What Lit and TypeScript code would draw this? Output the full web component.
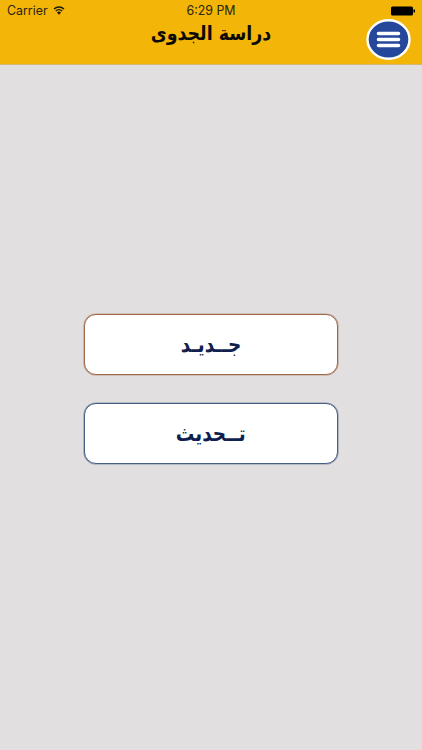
import { LitElement, html, css } from "lit";
import { customElement } from "lit/decorators.js";

@customElement("app-root")
export class AppRoot extends LitElement {
  static styles = css`
    :host { display: block; width: 422px; height: 750px; overflow: hidden; font-family: "Liberation Sans", Arial, sans-serif; }
    .page { height: 750px; display: flex; flex-direction: column; background: #e1dfe0; }
    .header { height: 65px; box-sizing: border-box; background: #f3b508; border-bottom: 1px solid #d2b874; position: relative; }
    .status { height: 20px; display: grid; grid-template-columns: 1fr auto 1fr; align-items: center; padding: 1px 7px 0; box-sizing: border-box; font-family: Inter, "Liberation Sans", sans-serif; font-size: 12.4px; color: #2a2410; }
    .left { display: flex; align-items: center; gap: 5px; }
    .right { justify-self: end; display: flex; }
    .title { direction: rtl; text-align: center; font-family: "DejaVu Sans", sans-serif; font-weight: 700; font-size: 20px; line-height: 26px; color: #0c0a06; transform: scaleX(0.87); }
    .menu { position: absolute; left: 366px; top: 19px; width: 45px; height: 41px; }
    .main { flex: 1; display: flex; flex-direction: column; align-items: center; gap: 28px; padding-top: 249px; }
    .btn { width: 254px; height: 61px; box-sizing: border-box; background: #fff; border-radius: 12px; display: flex; align-items: center; justify-content: center; font-family: "DejaVu Sans", sans-serif; font-weight: 700; font-size: 22px; color: #101f4d; }
    .btn span { direction: rtl; display: block; transform: scaleX(0.84); }
    .new { border: 1px solid #a0694a; box-shadow: 0 0 0 0.6px rgba(160, 105, 74, 0.55); }
    .upd { border: 1px solid #475f80; box-shadow: 0 0 0 0.6px rgba(71, 95, 128, 0.55); }
  `;
  render() {
    return html`<div class="page">
      <div class="header">
        <div class="status">
          <div class="left"><span>Carrier</span>
            <svg width="12" height="9" viewBox="0 0 13 10"><path d="M6.5 9.8 4.2 7.3a3.2 3.2 0 0 1 4.6 0Z" fill="#1d1a0c"/><path d="M2.9 5.6a5.1 5.1 0 0 1 7.2 0" fill="none" stroke="#1d1a0c" stroke-width="1.5"/><path d="M1 3.4a7.8 7.8 0 0 1 11 0" fill="none" stroke="#1d1a0c" stroke-width="1.5"/></svg>
          </div>
          <span>6:29 PM</span>
          <div class="right">
            <svg width="24" height="10" viewBox="0 0 24 10"><rect x="0" y="0.5" width="22" height="9" rx="1.5" fill="#000"/><rect x="22.5" y="3.5" width="1.5" height="3" fill="#000"/></svg>
          </div>
        </div>
        <div class="title">دراسة الجدوى</div>
        <svg class="menu" viewBox="0 0 45 41"><ellipse cx="22.5" cy="20.5" rx="21" ry="19.3" fill="#24479b" stroke="#fff" stroke-width="2.4"/><g stroke="#fff" stroke-width="3.6" stroke-linecap="round"><path d="M12.5 14.5h20M12.5 20.5h20M12.5 26.5h20"/></g></svg>
      </div>
      <div class="main">
        <div class="btn new"><span>جــديـد</span></div>
        <div class="btn upd"><span>تــحديث</span></div>
      </div>
    </div>`;
  }
}
